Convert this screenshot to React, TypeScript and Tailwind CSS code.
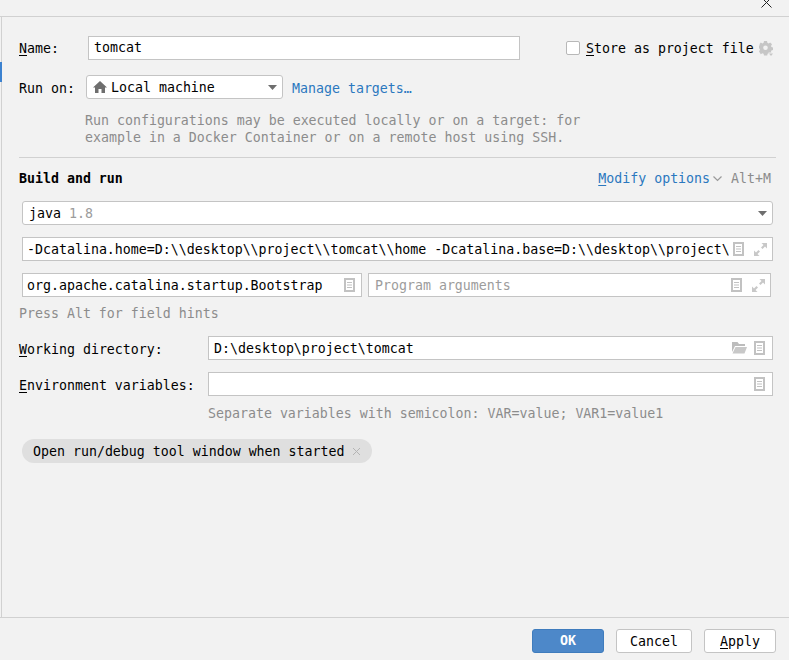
import React from "react";

const mono = "font-['DejaVu_Sans_Mono',monospace] text-[13.28px] leading-[16px]";

const DocIcon = () => (
  <svg width="11" height="14" viewBox="0 0 11 14" className="shrink-0">
    <path d="M0 0h11v14H0z" fill="#c2c2c2" />
    <path d="M2 2h7v10H2z" fill="#fff" />
    <path d="M3 4h5v1H3zM3 6.500h5v1H3zM3 9h5v1H3z" fill="#c2c2c2" />
  </svg>
);

const ExpandIcon = () => (
  <svg width="13" height="13" viewBox="0 0 13 13" className="shrink-0">
    <path d="M7.500 0H13v5.500L11 3.500 8.500 6 7 4.500 9.500 2z" fill="#c8c8c8" />
    <path d="M5.500 13H0V7.500L2 9.500 4.500 7 6 8.500 3.500 11z" fill="#c8c8c8" />
  </svg>
);

const FolderIcon = () => (
  <svg width="15" height="12" viewBox="0 0 15 12" className="shrink-0">
    <path d="M0 0h5.500l1.500 2h6v2H3L0 10z" fill="#bcbcbc" />
    <path d="M3.500 5H15l-2.500 6.500H0.500z" fill="#c8c8c8" />
  </svg>
);

const GearIcon = () => (
  <svg width="14" height="15" viewBox="0 0 14 15" className="shrink-0">
    <path
      fillRule="evenodd"
      d="M5 0h3l.4 1.800 1.200.6 1.600-1 1.800 1.900-1 1.600.4 1.200 1.600.4v2.600l-1.600.4-.4 1.200.4.700H9.500v1l-.9.400-.4 1.700H5l-.4-1.700-1.200-.5-1.600 1L0 10.400l1-1.600-.5-1.200L0 7.400V4.800l.5-.2.500-1.300L0 3.700 1.800 1.400l1.600 1 1.200-.6zM6.500 4.500a2.300 2.300 0 100 4.600 2.300 2.300 0 000-4.600z"
      fill="#c6c6c6"
    />
    <path d="M10 12.500h4L12 15z" fill="#c6c6c6" />
  </svg>
);

const CaretDown = () => (
  <svg width="9" height="5" viewBox="0 0 9 5" className="shrink-0">
    <path d="M0 0h9L4.500 5z" fill="#6e6e6e" />
  </svg>
);

const Field = ({ className, children }: { className: string; children?: React.ReactNode }) => (
  <div className={`flex items-center h-[24px] border border-[#c4c4c4] bg-white ${className}`}>
    {children}
  </div>
);

const Key = ({ children }: { children: string }) => <span className="underline underline-offset-2">{children}</span>;

const App = () => {
  return (
    <div className={`relative flex flex-col w-[789px] h-[660px] overflow-hidden bg-[#f2f2f2] text-black ${mono}`}>
      <svg width="11" height="8" viewBox="0 0 11 8" className="absolute left-[761px] top-0">
        <path d="M0.500 -2.500L10.500 7.500M10.500 -2.500L0.500 7.500" stroke="#222" strokeWidth="1" fill="none" />
      </svg>
      <div className="absolute left-0 top-[62px] w-[2px] h-[20px] bg-[#3c82d0]" />

      <div className="h-[17px] shrink-0 border-b border-[#d1d1d1]" />

      <div className="flex-1 flex flex-col ml-[1px] border-l border-[#d1d1d1] pl-[17px] pr-[13px]">
        <div className="flex items-center mt-[19px]">
          <span className="w-[69px] pt-[2px]"><Key>N</Key>ame:</span>
          <Field className="w-[432px] rounded-none pl-[5px]">tomcat</Field>
          <div className="w-[14px] h-[14px] ml-[46px] rounded-[2px] border border-[#b8b8b8] bg-white" />
          <span className="ml-[6px] pt-[2px]"><Key>S</Key>tore as project file</span>
          <span className="ml-[5px]"><GearIcon /></span>
        </div>

        <div className="flex items-center mt-[15px]">
          <span className="w-[67px] pt-[4px]">Run on:</span>
          <Field className="w-[197px] rounded-[3px] pl-[6px] pr-[5px]">
            <svg width="14" height="12" viewBox="0 0 14 12" className="shrink-0">
              <path d="M7 0l7 6.500h-2V12H8.500V8h-3v4H2V6.500H0z" fill="#6e6e6e" />
            </svg>
            <span className="ml-[4px] flex-1 pt-[2px]">Local machine</span>
            <CaretDown />
          </Field>
          <span className="ml-[9px] pt-[4px] text-[#2b78bf]">Manage targets…</span>
        </div>

        <div className="mt-[13px] ml-[66px] text-[#8c8c8c] leading-[17px]">
          <div>Run configurations may be executed locally or on a target: for</div>
          <div>example in a Docker Container or on a remote host using SSH.</div>
        </div>

        <div className="mt-[11px] mb-[13px] border-t border-[#d1d1d1]" />

        <div className="flex items-center h-[16px] pr-[5px]">
          <span className="flex-1 font-bold">Build and run</span>
          <span className="text-[#2b78bf]"><Key>M</Key>odify options</span>
          <svg width="9" height="6" viewBox="0 0 9 6" className="ml-[3px]">
            <path d="M0.500 0.500L4.500 4.500L8.500 0.500" stroke="#9a9a9a" strokeWidth="1.200" fill="none" />
          </svg>
          <span className="ml-[9px] text-[#8c8c8c]">Alt+M</span>
        </div>

        <Field className="mt-[14px] ml-[3px] w-[751px] rounded-[3px] pl-[6px] pr-[5px]">
          <span className="flex-1 pt-[2px]">java <span className="text-[#9c9c9c]">1.8</span></span>
          <CaretDown />
        </Field>

        <Field className="mt-[12px] ml-[3px] w-[751px] pl-[4px] pr-[5px]">
          <span className="w-[702px] pt-[2px] overflow-hidden whitespace-nowrap">
            -Dcatalina.home=D:\\desktop\\project\\tomcat\\home -Dcatalina.base=D:\\desktop\\project\
          </span>
          <span className="ml-[4px]"><DocIcon /></span>
          <span className="ml-[10px]"><ExpandIcon /></span>
        </Field>

        <div className="flex mt-[12px] ml-[3px]">
          <Field className="w-[340px] pl-[4px] pr-[6px]">
            <span className="flex-1 pt-[2px]">org.apache.catalina.startup.Bootstrap</span>
            <DocIcon />
          </Field>
          <Field className="ml-[6px] w-[403px] pl-[6px] pr-[5px]">
            <span className="flex-1 pt-[2px] text-[#9c9c9c]">Program arguments</span>
            <DocIcon />
            <span className="ml-[10px]"><ExpandIcon /></span>
          </Field>
        </div>

        <div className="mt-[9px] text-[#8c8c8c]">Press Alt for field hints</div>

        <div className="flex items-center mt-[14px]">
          <span className="w-[189px] pt-[4px]"><Key>W</Key>orking directory:</span>
          <Field className="w-[565px] pl-[5px] pr-[7px]">
            <span className="flex-1 pt-[2px]">D:\desktop\project\tomcat</span>
            <FolderIcon />
            <span className="ml-[7px]"><DocIcon /></span>
          </Field>
        </div>

        <div className="flex items-center mt-[12px]">
          <span className="w-[189px] pt-[4px]"><Key>E</Key>nvironment variables:</span>
          <Field className="w-[565px] justify-end pr-[7px]">
            <DocIcon />
          </Field>
        </div>

        <div className="mt-[10px] ml-[189px] text-[#8c8c8c]">Separate variables with semicolon: VAR=value; VAR1=value1</div>

        <div className="flex items-center mt-[17px] ml-[3px] w-[350px] h-[24px] rounded-full bg-[#dfdfdf] pl-[11px]">
          <span className="pt-[2px]">Open run/debug tool window when started</span>
          <svg width="9" height="9" viewBox="0 0 9 9" className="ml-[8px]">
            <path d="M1 1L8 8M8 1L1 8" stroke="#b4b4b4" strokeWidth="1" fill="none" />
          </svg>
        </div>
      </div>

      <div className="flex justify-end gap-[12px] h-[43px] pt-[11px] pr-[13px] shrink-0 border-t border-[#d1d1d1]">
        <button className="w-[72px] h-[24px] rounded-[3px] border border-[#3f7cbd] bg-[#4d88c9] text-white font-bold">OK</button>
        <button className="w-[76px] h-[24px] pt-[2px] rounded-[3px] border border-[#c4c4c4] bg-white">Cancel</button>
        <button className="w-[72px] h-[24px] pt-[2px] rounded-[3px] border border-[#c4c4c4] bg-white"><Key>A</Key>pply</button>
      </div>
    </div>
  );
};

export default App;
